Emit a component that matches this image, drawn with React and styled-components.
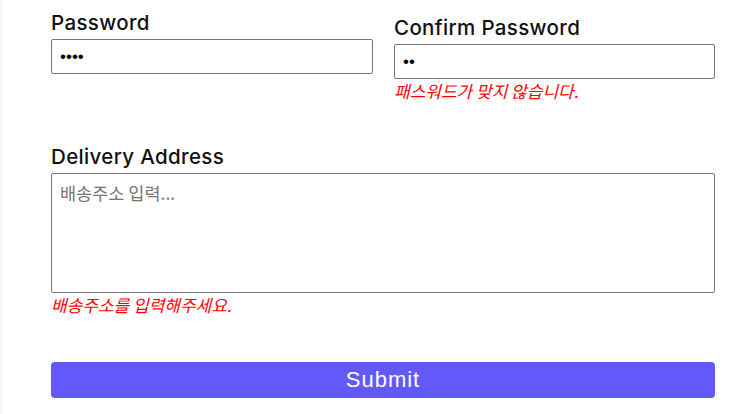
import React from "react";
import styled, { createGlobalStyle } from "styled-components";

const Global = createGlobalStyle`
  html, body { margin: 0; padding: 0; background: #f6f7f9; }
  body { font-family: "Inter", "Noto Sans CJK KR", sans-serif; }
  * { box-sizing: border-box; }
`;

const Page = styled.div`
  margin-left: 3px;
  min-height: 414px;
  background: #ffffff;
  padding: 10px 0 0 48px;
`;

const Form = styled.form`
  width: 664px;
  display: flex;
  flex-direction: column;
`;

const Row = styled.div`
  display: grid;
  grid-template-columns: 322px 321px;
  column-gap: 21px;
  align-items: start;
`;

const Field = styled.div`
  display: flex;
  flex-direction: column;
  margin-top: ${(p) => p.$offset || 0}px;
`;

const Label = styled.label`
  font-family: "Inter", sans-serif;
  font-weight: 500;
  font-size: 20.5px;
  line-height: 26px;
  color: #111;
  margin-bottom: 3px;
  letter-spacing: 0.35px;
`;

const Input = styled.input`
  height: 35px;
  width: 100%;
  border: 1px solid #767676;
  border-radius: 2px;
  padding: 0 8px;
  font-family: "Liberation Sans", Arial, sans-serif;
  font-size: 17px;
  color: #000;
  outline: none;
  background: #fff;
  caret-color: #000;
`;

const TextArea = styled.textarea`
  height: 120px;
  width: 100%;
  border: 1px solid #767676;
  border-radius: 2px;
  padding: 7px 8px;
  font-family: "Noto Sans CJK KR", sans-serif;
  font-size: 17.5px;
  line-height: 24px;
  resize: none;
  outline: none;
  &::placeholder { color: #757575; }
`;

const Error = styled.p`
  margin: 1px 0 0;
  font-family: "Noto Sans CJK KR", sans-serif;
  font-style: italic;
  font-size: 17px;
  line-height: 22px;
  color: #ff0000;
`;

const Section = styled.div`
  margin-top: ${(p) => p.$top}px;
  display: flex;
  flex-direction: column;
`;

const Submit = styled.button`
  margin-top: 46px;
  height: 36px;
  width: 100%;
  border: none;
  border-radius: 4px;
  background: #6358f8;
  color: #fff;
  font-family: "Liberation Sans", Arial, sans-serif;
  font-size: 22px;
  letter-spacing: 1px;
  cursor: pointer;
`;

export default function App() {
  return (
    <>
      <Global />
      <Page>
        <Form onSubmit={(e) => e.preventDefault()}>
          <Row>
            <Field>
              <Label>Password</Label>
              <Input type="password" defaultValue="1234" />
            </Field>
            <Field $offset={5}>
              <Label>Confirm Password</Label>
              <Input type="password" defaultValue="12" autoFocus />
              <Error>패스워드가 맞지 않습니다.</Error>
            </Field>
          </Row>
          <Section $top={42}>
            <Label>Delivery Address</Label>
            <TextArea placeholder="배송주소 입력..." />
            <Error>배송주소를 입력해주세요.</Error>
          </Section>
          <Submit type="submit">Submit</Submit>
        </Form>
      </Page>
    </>
  );
}
